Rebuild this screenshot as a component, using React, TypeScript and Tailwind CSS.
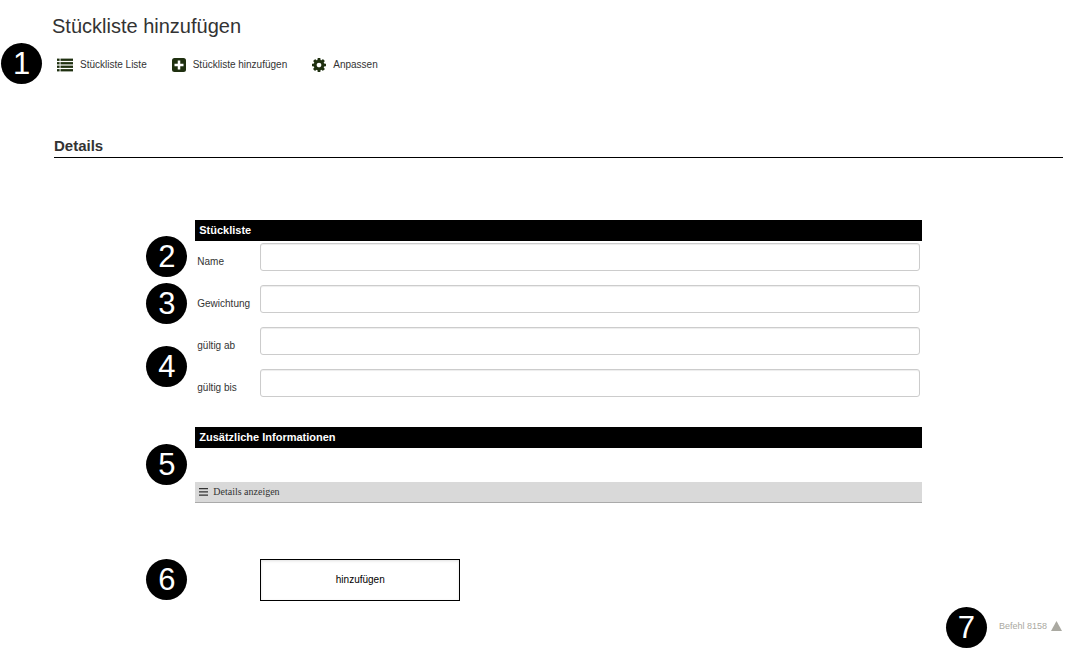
import type { ReactNode } from 'react';

const GEAR =
  'M1152 896q0-106-75-181t-181-75-181 75-75 181 75 181 181 75 181-75 75-181zm512-109v222q0 12-8 23t-20 13l-185 28q-19 54-39 91 35 50 107 138 10 12 10 25t-9 23q-27 37-99 108t-94 71q-12 0-26-9l-138-108q-44 23-91 38-16 136-29 186-7 28-36 28h-222q-14 0-24.500-8.500t-11.500-21.500l-28-184q-49-16-90-37l-141 107q-10 9-25 9-14 0-25-11-126-114-165-168-7-10-7-23 0-12 8-23 15-21 51-66.500t54-70.500q-27-50-41-99l-183-27q-13-2-21-12.500t-8-23.500v-222q0-12 8-23t19-13l186-28q14-46 39-92-40-57-107-138-10-12-10-24 0-10 9-23 26-36 98.500-107.500t94.500-71.500q13 0 26 10l138 107q44-23 91-38 16-136 29-186 7-28 36-28h222q14 0 24.500 8.500t11.500 21.500l28 184q49 16 90 37l142-107q9-9 24-9 13 0 25 10 129 119 165 170 7 8 7 22 0 12-8 23-15 21-51 66.500t-54 70.500q26 50 41 98l183 28q13 2 21 12.500t8 23.500z';

function ListIcon() {
  return (
    <svg className="h-[14px] w-4" viewBox="0 0 16 14" fill="#1f3010" aria-hidden="true">
      {[0.6, 4.1, 7.6, 11.1].map((y) => (
        <g key={y}>
          <rect x="0" y={y} width="2.600" height="2.300" />
          <rect x="3.500" y={y} width="12.500" height="2.300" />
        </g>
      ))}
    </svg>
  );
}

function PlusIcon() {
  return (
    <svg className="size-[14px]" viewBox="0 0 14 14" aria-hidden="true">
      <rect width="14" height="14" rx="2.500" fill="#1f3010" />
      <path d="M7 2.500v9M2.500 7h9" stroke="#fff" strokeWidth="2.500" />
    </svg>
  );
}

function GearIcon() {
  return (
    <svg className="size-[14px]" viewBox="128 128 1536 1536" fill="#1f3010" aria-hidden="true">
      <path d={GEAR} />
    </svg>
  );
}

function Badge({ n, className }: { n: number; className: string }) {
  return (
    <span
      className={`absolute flex size-[41px] items-center justify-center rounded-full bg-black text-[31px] leading-none text-white ${className}`}
    >
      {n}
    </span>
  );
}

function NavLink({ icon, children }: { icon: ReactNode; children: ReactNode }) {
  return (
    <a href="#" className="flex items-center gap-[7px]">
      {icon}
      {children}
    </a>
  );
}

function SectionTitle({ children }: { children: ReactNode }) {
  return <h3 className="bg-black px-1 text-[11px] leading-[21px] font-bold text-white">{children}</h3>;
}

function Field({ id, label, badge }: { id: string; label: string; badge?: ReactNode }) {
  return (
    <div className="relative flex h-[42px] items-center px-[2px]">
      {badge}
      <label htmlFor={id} className="w-[63px] shrink-0">
        {label}
      </label>
      <input
        id={id}
        type="text"
        className="mt-[2px] h-7 min-w-0 flex-1 self-start rounded-[3px] border border-[#ccc] bg-white px-2 shadow-[inset_0_1px_1px_rgba(0,0,0,0.075)]"
      />
    </div>
  );
}

export default function App() {
  return (
    <div className="bg-white pr-[2px] pb-5 pl-[54px] font-['Liberation_Sans',Arial,sans-serif] text-[10px] leading-[14px] text-[#333]">
      <header className="-ml-[2px] pt-[14px]">
        <h1 className="text-[20px] leading-6">Stückliste hinzufügen</h1>
      </header>

      <nav className="relative mt-5 flex items-center gap-[25px] pl-[3px]">
        <Badge n={1} className="top-[-15px] left-[-53px]" />
        <NavLink icon={<ListIcon />}>Stückliste Liste</NavLink>
        <NavLink icon={<PlusIcon />}>Stückliste hinzufügen</NavLink>
        <NavLink icon={<GearIcon />}>Anpassen</NavLink>
      </nav>

      <h2 className="mt-16 border-b border-black pb-[1px] text-[15px] leading-5 font-bold">Details</h2>

      <form className="mx-auto mt-[62px] w-[72%]" onSubmit={(e) => e.preventDefault()}>
        <SectionTitle>Stückliste</SectionTitle>
        <Field id="name" label="Name" badge={<Badge n={2} className="top-[-5px] left-[-49px]" />} />
        <Field id="weight" label="Gewichtung" badge={<Badge n={3} className="top-0 left-[-49px]" />} />
        <Field id="valid-from" label="gültig ab" badge={<Badge n={4} className="top-[21px] left-[-49px]" />} />
        <Field id="valid-to" label="gültig bis" />

        <section className="relative mt-[18px]">
          <SectionTitle>Zusätzliche Informationen</SectionTitle>
          <Badge n={5} className="top-[17px] left-[-49px]" />
          <button
            type="button"
            className="mt-[34px] flex h-[21px] w-full items-center gap-[5px] border-b border-[#aaa] bg-[#d9d9d9] px-1 font-['Liberation_Serif',serif]"
          >
            <svg className="h-[9px] w-[9px]" viewBox="0 0 9 9" fill="#333" aria-hidden="true">
              <path d="M0 0h9v1.200H0zM0 3.300h9v1.200H0zM0 6.600h9v1.200H0z" />
            </svg>
            Details anzeigen
          </button>
        </section>

        <div className="relative mt-14 pl-[65px]">
          <Badge n={6} className="top-0 left-[-49px]" />
          <button
            type="submit"
            className="h-[42px] w-[200px] border border-black bg-white text-black shadow-[inset_0_1px_3px_rgba(0,0,0,0.12)]"
          >
            hinzufügen
          </button>
        </div>
      </form>

      <footer className="mt-[18px] flex justify-end">
        <a href="#" className="relative flex items-center gap-1 pr-[1px] text-[9px] text-[#aaa9a1]">
          <Badge n={7} className="top-[-12px] left-[-53px]" />
          Befehl 8158
          <svg className="h-[10px] w-[11px]" viewBox="0 0 11 10" fill="#aaa9a1" aria-hidden="true">
            <path d="M5.500 0 11 10H0z" />
          </svg>
        </a>
      </footer>
    </div>
  );
}
